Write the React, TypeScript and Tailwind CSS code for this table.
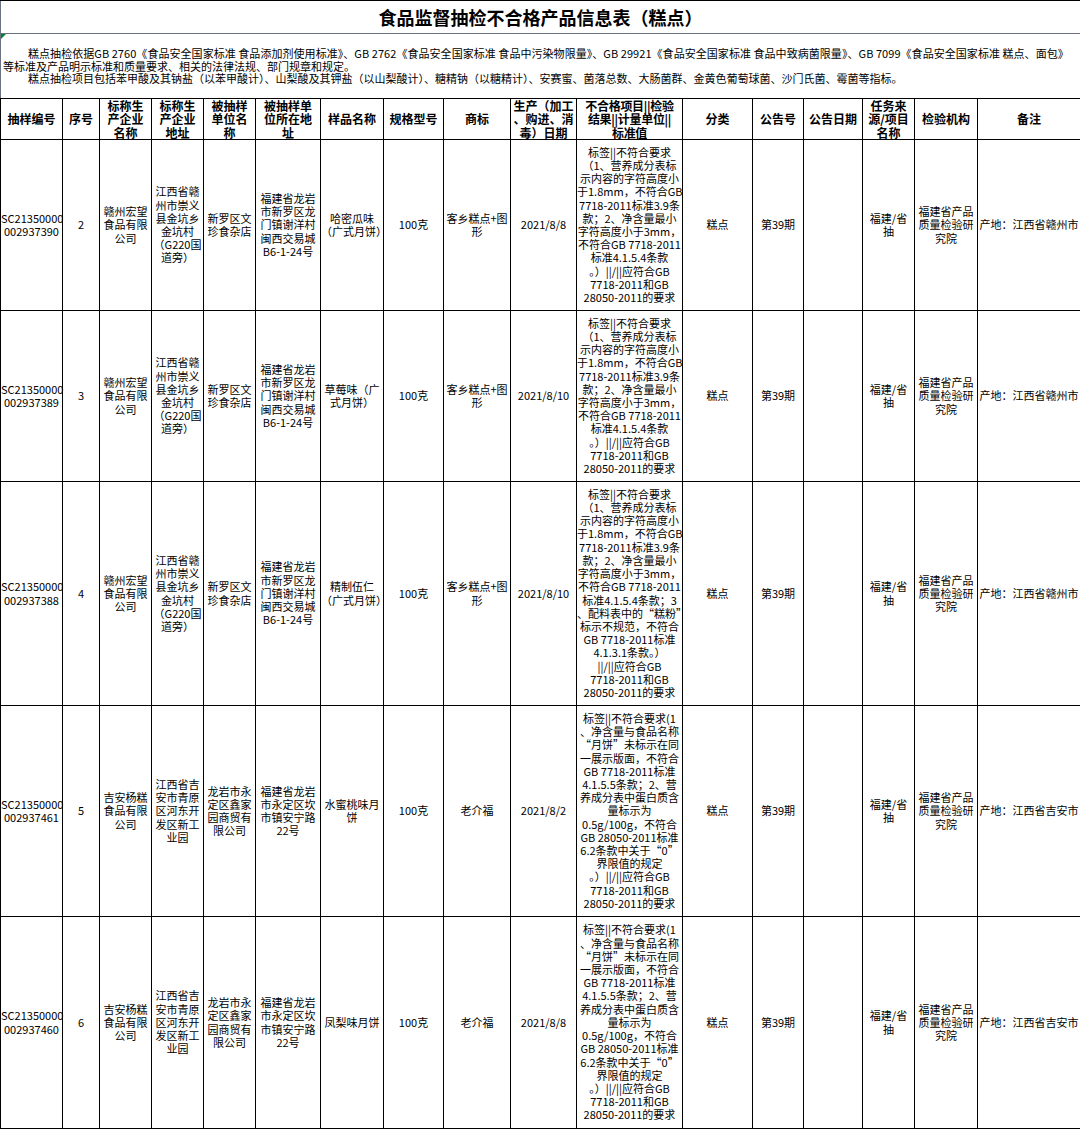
import React from 'react';

type Row = {
  id: string[];
  no: string;
  maker: string[];
  makerAddr: string[];
  seller: string[];
  sellerAddr: string[];
  sample: string[];
  spec: string;
  brand: string[];
  date: string;
  issue: string[];
  kind: string;
  notice: string;
  noticeDate: string;
  source: string[];
  lab: string[];
  remark: string;
  height: string;
};

const widths = [62, 37, 52, 52, 52, 65, 63, 60, 67, 66, 106, 70, 51, 59, 52, 63, 103];

const headers: string[][] = [
  ['抽样编号'],
  ['序号'],
  ['标称生', '产企业', '名称'],
  ['标称生', '产企业', '地址'],
  ['被抽样', '单位名', '称'],
  ['被抽样单', '位所在地', '址'],
  ['样品名称'],
  ['规格型号'],
  ['商标'],
  ['生产（加工', '、购进、消', '毒）日期'],
  ['不合格项目||检验', '结果||计量单位||', '标准值'],
  ['分类'],
  ['公告号'],
  ['公告日期'],
  ['任务来', '源/项目', '名称'],
  ['检验机构'],
  ['备注'],
];

const ganzhou = {
  maker: ['赣州宏望', '食品有限', '公司'],
  makerAddr: ['江西省赣', '州市崇义', '县金坑乡', '金坑村', '（G220国', '道旁）'],
  seller: ['新罗区文', '珍食杂店'],
  sellerAddr: ['福建省龙岩', '市新罗区龙', '门镇谢洋村', '闽西交易城', 'B6-1-24号'],
  brand: ['客乡糕点+图', '形'],
  remark: '产地：江西省赣州市',
};

const jian = {
  maker: ['吉安杨糕', '食品有限', '公司'],
  makerAddr: ['江西省吉', '安市青原', '区河东开', '发区新工', '业园'],
  seller: ['龙岩市永', '定区鑫家', '园商贸有', '限公司'],
  sellerAddr: ['福建省龙岩', '市永定区坎', '市镇安宁路', '22号'],
  brand: ['老介福'],
  remark: '产地：江西省吉安市',
};

const common = {
  spec: '100克',
  kind: '糕点',
  notice: '第39期',
  noticeDate: '',
  source: ['福建/省', '抽'],
  lab: ['福建省产品', '质量检验研', '究院'],
};

const labelIssue = [
  '标签||不符合要求',
  '（1、营养成分表标',
  '示内容的字符高度小',
  '于1.8mm，不符合GB',
  '7718-2011标准3.9条',
  '款；2、净含量最小',
  '字符高度小于3mm，',
  '不符合GB 7718-2011',
  '标准4.1.5.4条款',
  '。）||/||应符合GB',
  '7718-2011和GB',
  '28050-2011的要求',
];

const mooncakeIssue = [
  '标签||不符合要求(1',
  '、净含量与食品名称',
  '“月饼”未标示在同',
  '一展示版面，不符合',
  'GB 7718-2011标准',
  '4.1.5.5条款；2、营',
  '养成分表中蛋白质含',
  '量标示为',
  '0.5g/100g，不符合',
  'GB 28050-2011标准',
  '6.2条款中关于“0”',
  '界限值的规定',
  '。）||/||应符合GB',
  '7718-2011和GB',
  '28050-2011的要求',
];

const rows: Row[] = [
  {
    ...common,
    ...ganzhou,
    id: ['SC21350000', '002937390'],
    no: '2',
    sample: ['哈密瓜味', '（广式月饼）'],
    date: '2021/8/8',
    issue: labelIssue,
    height: 'h-[171px]',
  },
  {
    ...common,
    ...ganzhou,
    id: ['SC21350000', '002937389'],
    no: '3',
    sample: ['草莓味（广', '式月饼）'],
    date: '2021/8/10',
    issue: labelIssue,
    height: 'h-[171px]',
  },
  {
    ...common,
    ...ganzhou,
    id: ['SC21350000', '002937388'],
    no: '4',
    sample: ['精制伍仁', '（广式月饼）'],
    date: '2021/8/10',
    issue: [
      '标签||不符合要求',
      '（1、营养成分表标',
      '示内容的字符高度小',
      '于1.8mm，不符合GB',
      '7718-2011标准3.9条',
      '款；2、净含量最小',
      '字符高度小于3mm，',
      '不符合GB 7718-2011',
      '标准4.1.5.4条款；3',
      '、配料表中的“糕粉”',
      '标示不规范，不符合',
      'GB 7718-2011标准',
      '4.1.3.1条款。）',
      '||/||应符合GB',
      '7718-2011和GB',
      '28050-2011的要求',
    ],
    height: 'h-[224px]',
  },
  {
    ...common,
    ...jian,
    id: ['SC21350000', '002937461'],
    no: '5',
    sample: ['水蜜桃味月', '饼'],
    date: '2021/8/2',
    issue: mooncakeIssue,
    height: 'h-[211px]',
  },
  {
    ...common,
    ...jian,
    id: ['SC21350000', '002937460'],
    no: '6',
    sample: ['凤梨味月饼'],
    date: '2021/8/8',
    issue: mooncakeIssue,
    height: 'h-[212px]',
  },
];

const Lines: React.FC<{ lines: string[] }> = ({ lines }) => (
  <>
    {lines.map((l, i) => (
      <React.Fragment key={i}>
        {i > 0 && <br />}
        {l}
      </React.Fragment>
    ))}
  </>
);

const cell = 'border border-black p-0 text-center align-middle whitespace-nowrap text-[11px] leading-[13.2px]';

const App: React.FC = () => {
  return (
    <div className="w-[1080px] bg-white text-black font-['Noto_Sans_CJK_SC','Noto_Sans',sans-serif]">
      <table className="w-[1080px] table-fixed border-collapse">
        <colgroup>
          {widths.map((w, i) => (
            <col key={i} style={{ width: w }} />
          ))}
        </colgroup>
        <tbody>
          {/* Title */}
          <tr className="h-[33px]">
            <td
              colSpan={17}
              className="border border-gray-500 border-t-black p-0 text-center align-middle text-[18px] font-bold leading-none"
            >
              食品监督抽检不合格产品信息表（糕点）
            </td>
          </tr>

          {/* Notes */}
          <tr className="h-[65px]">
            <td
              colSpan={17}
              className="relative border border-gray-500 border-b-black px-0 pt-[13px] pb-0 align-top text-[11px] leading-[12.5px] whitespace-nowrap overflow-hidden"
            >
              <span className="absolute left-0 top-0 h-0 w-0 border-t-[5px] border-r-[5px] border-t-green-700 border-r-transparent" />
              <div className="pl-[27px] tracking-[0.05px]">
                糕点抽检依据GB 2760《食品安全国家标准 食品添加剂使用标准》、GB 2762《食品安全国家标准 食品中污染物限量》、GB 29921《食品安全国家标准 食品中致病菌限量》、GB 7099《食品安全国家标准 糕点、面包》
              </div>
              <div className="pl-[2px]">等标准及产品明示标准和质量要求、相关的法律法规、部门规章和规定。</div>
              <div className="pl-[27px]">
                糕点抽检项目包括苯甲酸及其钠盐（以苯甲酸计）、山梨酸及其钾盐（以山梨酸计）、糖精钠（以糖精计）、安赛蜜、菌落总数、大肠菌群、金黄色葡萄球菌、沙门氏菌、霉菌等指标。
              </div>
            </td>
          </tr>

          {/* Header */}
          <tr className="h-[41px]">
            {headers.map((h, i) => (
              <td
                key={i}
                className={`${cell} font-bold text-[12px] leading-[13.3px] ${i === 10 ? 'tracking-[-0.3px]' : ''}`}
              >
                <Lines lines={h} />
              </td>
            ))}
          </tr>

          {/* Data rows */}
          {rows.map((r) => (
            <tr key={r.no} className={r.height}>
              <td className={`${cell} text-[10px]`}>
                <Lines lines={r.id} />
              </td>
              <td className={cell}>{r.no}</td>
              <td className={cell}>
                <Lines lines={r.maker} />
              </td>
              <td className={cell}>
                <Lines lines={r.makerAddr} />
              </td>
              <td className={cell}>
                <Lines lines={r.seller} />
              </td>
              <td className={cell}>
                <Lines lines={r.sellerAddr} />
              </td>
              <td className={cell}>
                <Lines lines={r.sample} />
              </td>
              <td className={cell}>{r.spec}</td>
              <td className={cell}>
                <Lines lines={r.brand} />
              </td>
              <td className={cell}>{r.date}</td>
              <td className={cell}>
                <Lines lines={r.issue} />
              </td>
              <td className={cell}>{r.kind}</td>
              <td className={cell}>{r.notice}</td>
              <td className={cell}>{r.noticeDate}</td>
              <td className={cell}>
                <Lines lines={r.source} />
              </td>
              <td className={cell}>
                <Lines lines={r.lab} />
              </td>
              <td className={cell}>{r.remark}</td>
            </tr>
          ))}
        </tbody>
      </table>
    </div>
  );
};

export default App;
